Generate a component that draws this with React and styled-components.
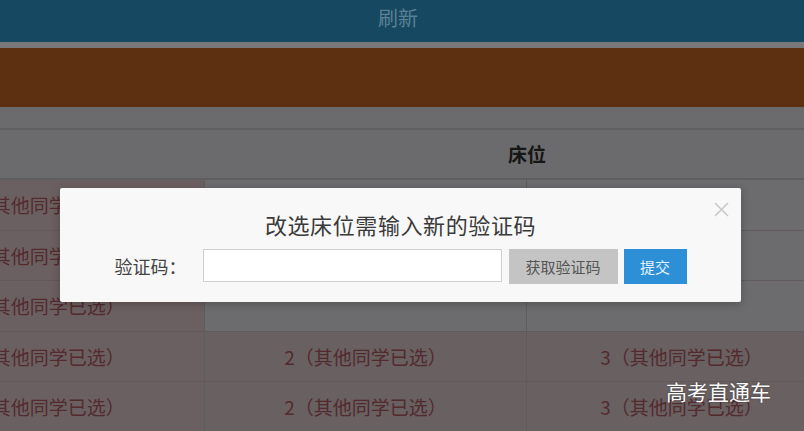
import React, { useState } from 'react';
import styled, { createGlobalStyle } from 'styled-components';

const GlobalStyle = createGlobalStyle`
  html, body {
    margin: 0;
    padding: 0;
    background: #6b6a6c;
    overflow: hidden;
    font-family: "Noto Sans CJK SC", "Noto Sans", sans-serif;
  }
`;

const rows = [
  { id: 1, blank: true },
  { id: 2, blank: true },
  { id: 3, blank: true },
  { id: 4, blank: false },
  { id: 5, blank: false },
];

export default function App() {
  const [code, setCode] = useState('');

  return (
    <Page>
      <GlobalStyle />
      <TopBar>刷新</TopBar>
      <Stripe />
      <Banner />
      <Spacer />
      <Table>
        <HeaderRow>
          <HeaderCell />
          <HeaderCell wide>床位</HeaderCell>
        </HeaderRow>
        {rows.map((row) => (
          <Row key={row.id}>
            <Cell tint="first">1（其他同学已选）</Cell>
            <Cell tint={row.blank ? 'empty' : 'taken'}>
              {row.blank ? '' : '2（其他同学已选）'}
            </Cell>
            <Cell tint={row.blank ? 'empty' : 'taken'}>
              {row.blank ? '' : '3（其他同学已选）'}
            </Cell>
          </Row>
        ))}
      </Table>

      <Modal>
        <CloseButton aria-label="关闭">
          <svg width="15" height="15" viewBox="0 0 15 15">
            <path d="M1 1 L14 14 M14 1 L1 14" stroke="#c9c9c9" strokeWidth="1.6" fill="none" />
          </svg>
        </CloseButton>
        <ModalTitle>改选床位需输入新的验证码</ModalTitle>
        <FormRow>
          <Label>验证码：</Label>
          <CodeInput value={code} onChange={(e) => setCode(e.target.value)} />
          <Button variant="grey">获取验证码</Button>
          <Button variant="blue">提交</Button>
        </FormRow>
      </Modal>

      <Watermark>高考直通车</Watermark>
    </Page>
  );
}

const Page = styled.div`
  width: 804px;
  height: 431px;
  overflow: hidden;
  position: relative;
`;

const TopBar = styled.div`
  height: 42px;
  background: #164861;
  color: #5a8095;
  font-size: 20px;
  line-height: 36px;
  text-align: center;
  padding-right: 8px;
`;

const Stripe = styled.div`
  height: 6px;
  background: #79797b;
`;

const Banner = styled.div`
  height: 59px;
  background: #5d3011;
`;

const Spacer = styled.div`
  height: 21px;
  border-bottom: 2px solid #5f5e60;
`;

const Table = styled.div`
  display: grid;
  grid-template-columns: 322px 322px 310px;
  width: 954px;
  margin-left: -117px;
`;

const HeaderRow = styled.div`
  display: contents;
`;

const HeaderCell = styled.div`
  grid-column: ${(p) => (p.wide ? 'span 2' : 'span 1')};
  height: 48px;
  line-height: 48px;
  text-align: center;
  padding-left: ${(p) => (p.wide ? '12px' : '0')};
  font-size: 19px;
  font-weight: 700;
  color: #161616;
  border-bottom: 2px solid #5e5d5f;
`;

const Row = styled.div`
  display: contents;
`;

const tints = {
  first: '#6b6061',
  empty: '#6c6b6d',
  taken: '#686061',
};

const Cell = styled.div`
  height: 50.5px;
  box-sizing: border-box;
  display: flex;
  align-items: center;
  justify-content: center;
  background: ${(p) => tints[p.tint]};
  border-bottom: 1px solid #615a5b;
  border-right: 1px solid #625b5c;
  font-size: 19px;
  color: #532a2d;
  white-space: nowrap;
`;

const Modal = styled.div`
  position: absolute;
  top: 188px;
  left: 60px;
  width: 681px;
  box-sizing: border-box;
  padding: 21px 0 18px;
  background: #f8f8f8;
  border-radius: 2px;
  box-shadow: 0 2px 8px rgba(0, 0, 0, 0.25);
`;

const CloseButton = styled.button`
  position: absolute;
  top: 14px;
  right: 12px;
  padding: 0;
  border: none;
  background: transparent;
  display: flex;
  cursor: pointer;
`;

const ModalTitle = styled.div`
  font-size: 22px;
  letter-spacing: 0.6px;
  line-height: 30px;
  text-align: center;
  color: #3a3a3a;
`;

const FormRow = styled.div`
  margin-top: 10px;
  display: flex;
  justify-content: center;
  align-items: flex-start;
`;

const Label = styled.span`
  font-size: 18px;
  line-height: 35px;
  color: #444;
  margin-right: 16px;
`;

const CodeInput = styled.input`
  width: 299px;
  height: 33px;
  box-sizing: border-box;
  border: 1px solid #cfcfcf;
  background: #fff;
  outline: none;
  margin-right: 7px;
`;

const Button = styled.button`
  height: 35px;
  padding: 0;
  border: none;
  font-family: inherit;
  font-size: 15px;
  width: ${(p) => (p.variant === 'blue' ? '63px' : '109px')};
  margin-right: ${(p) => (p.variant === 'blue' ? '0' : '6px')};
  background: ${(p) => (p.variant === 'blue' ? '#2d8fd6' : '#c4c4c4')};
  color: ${(p) => (p.variant === 'blue' ? '#e4f1fc' : '#555')};
  cursor: pointer;
`;

const Watermark = styled.div`
  position: absolute;
  left: 666px;
  top: 376px;
  font-size: 21px;
  color: #fafafa;
  text-shadow: 0 0 2px rgba(0, 0, 0, 0.4);
`;
